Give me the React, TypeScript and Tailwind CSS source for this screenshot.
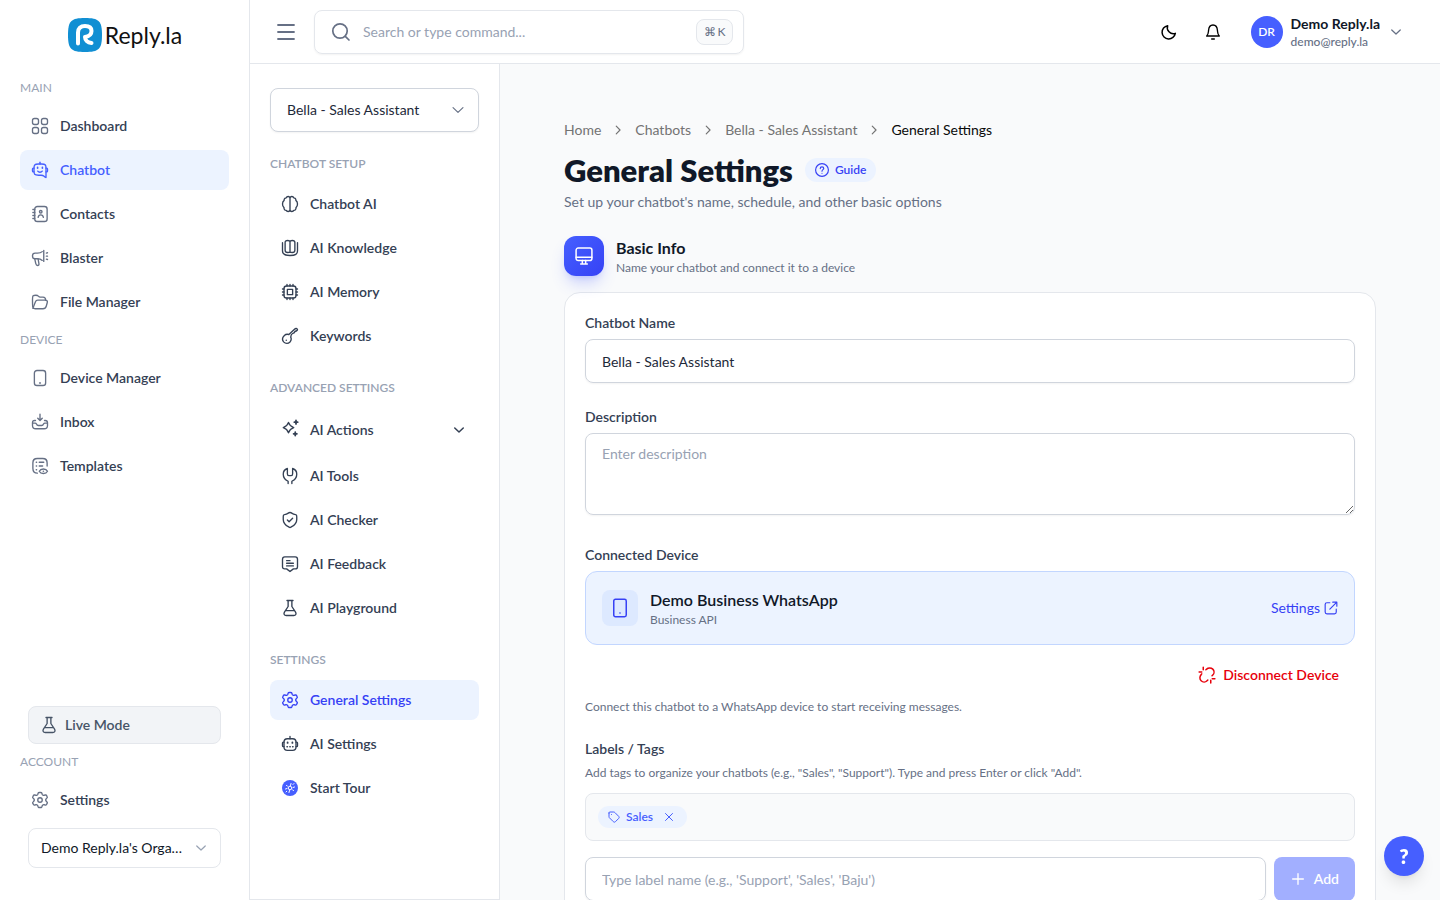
import type { ReactNode } from 'react';
import { clsx } from 'clsx';

interface IconProps {
  className?: string;
  children: ReactNode;
}

const Icon = ({ className = 'm-px size-4.5', children }: IconProps) => (
  <svg
    className={clsx('shrink-0', className)}
    viewBox="0 0 24 24"
    fill="none"
    stroke="currentColor"
    strokeWidth={1.8}
    strokeLinecap="round"
    strokeLinejoin="round"
    aria-hidden="true"
  >
    {children}
  </svg>
);

const DashboardIcon = () => (
  <Icon>
    <rect x="2" y="2" width="8" height="8" rx="2.6" />
    <rect x="14" y="2" width="8" height="8" rx="2.6" />
    <rect x="2" y="14" width="8" height="8" rx="2.6" />
    <rect x="14" y="14" width="8" height="8" rx="2.6" />
  </Icon>
);

const ChatbotIcon = () => (
  <Icon>
    <path d="M12 4V1.5" />
    <path d="M10 4h4c3 0 4.3.3 5.2 1.300.8 1 .8 2.300.8 4.700v12c-1.200 0-2-1-3-2-1-.9-1.800-1-3.500-1H10c-2.900 0-4.200-.3-5.100-1.200C4 16.800 4 15.400 4 13v-3c0-2.400 0-3.800.9-4.700C5.800 4.300 7.100 4 10 4Z" />
    <path d="M4 9.500H3c-.8 0-1 .5-1 1.200v2.600c0 .8.3 1.200 1 1.200h1M20 9.500h1c.8 0 1 .5 1 1.200v2.600c0 .8-.3 1.200-1 1.200h-1" />
    <path d="M8.800 8.500v1M15.200 8.500v1" strokeWidth={2.2} />
    <path d="M9 13.500s1 1.500 3 1.500 3-1.500 3-1.500" />
  </Icon>
);

const ContactsIcon = () => (
  <Icon>
    <rect x="5" y="2" width="16.500" height="20" rx="3.500" />
    <path d="M2.500 6H5M2.500 10H5M2.500 14H5M2.500 18H5" />
    <circle cx="13" cy="9" r="1.700" />
    <path d="M9.500 16.500c.4-2.300 1.700-3.300 3.500-3.300s3.100 1 3.500 3.300" />
  </Icon>
);

const BlasterIcon = () => (
  <Icon>
    <path d="M15 3.500c-1.500 1.400-3.500 2-6.500 2h-3C3.300 5.500 2 7 2 9.200S3.300 13 5.500 13h3c3 0 5 .8 6.500 2.200" />
    <path d="M17 2v14.500" />
    <path d="m5 13.200 1.300 6c.4 1.700 1.300 2.800 2.500 2.800 1.400 0 2-1 1.800-2.200L9.500 13.200" />
    <path d="M20.500 5.500 22 5M20.500 9.500H22M20.500 13.500l1.500.5" />
  </Icon>
);

const FolderIcon = () => (
  <Icon>
    <path d="M2.400 18.500C2 16 2 12 2 8.500c0-2.700 0-4 .8-4.900C3.700 3 4.600 3 6.500 3c1.600 0 2.500.2 3.300 1.200.8.900 1.200 1.300 2.500 1.300H16c2.500 0 3.500.9 3.500 4" />
    <path d="M2.500 20.500 5.800 12c.7-1.900 1.200-2.500 3.200-2.500h9.800c2.300 0 3.500.9 2.900 3.200l-1.400 5c-.7 2.500-1.500 3.300-4.300 3.300H5.500c-2 0-2.800-.1-3.100-2.500" />
  </Icon>
);

const PhoneIcon = () => (
  <Icon>
    <rect x="4.500" y="2" width="15" height="20" rx="3.500" />
    <path d="M11.500 18.500h1" strokeWidth={2} />
  </Icon>
);

const InboxIcon = () => (
  <Icon>
    <path d="M12 1.500v8M9 7l3 3 3-3" />
    <path d="M6 10H5c-2.300 0-3 .9-3 3v3.500C2 20 3 21 6.500 21h11c3.500 0 4.500-1 4.500-4.500V13c0-2.100-.7-3-3-3h-1" />
    <path d="M2.200 13.500h3.300c1 0 1.400.4 1.800 1.200.5 1.300 1.100 2 2.500 2h4.400c1.400 0 2-.7 2.500-2 .4-.8.8-1.200 1.800-1.200h3.300" />
  </Icon>
);

const TemplatesIcon = () => (
  <Icon>
    <path d="M21.500 12V8c0-4.500-1.500-6-6-6h-7c-4.500 0-6 1.500-6 6v7c0 4.500 1.500 6.500 6 6.500" />
    <path d="M7 7h.5M11 7h6M7 12h.5M11 12h4.500M7 17h.5" />
    <path d="M11 19s1.500-3 5.500-3 5.500 3 5.500 3-1.500 3-5.500 3-5.500-3-5.500-3Z" />
    <path d="M16.500 19h.01" strokeWidth={2.2} />
  </Icon>
);

const FlaskIcon = () => (
  <Icon>
    <path d="M8 2h8M9.500 2v8l-4.900 7.500C3.200 19.900 4.300 22 7 22h10c2.700 0 3.800-2.100 2.400-4.500L14.500 10V2M6.500 15.500h11" />
  </Icon>
);

const GearIcon = () => (
  <Icon>
    <path d="M21.300 7.100l-.5-.8c-.4-.7-.6-1-.9-1.100-.4-.1-.7 0-1.400.2l-1.200.3c-.5.100-.9 0-1.300-.2l-.3-.2c-.4-.2-.6-.6-.8-1l-.3-1c-.2-.6-.3-.9-.6-1.100S13.300 2 12.600 2h-1.200c-.8 0-1.100 0-1.400.2s-.4.5-.6 1.100l-.3 1c-.2.400-.4.800-.8 1l-.3.2c-.4.200-.8.300-1.300.2l-1.200-.3c-.7-.2-1-.3-1.400-.2-.3.1-.5.4-.9 1.100l-.5.800c-.4.600-.6.900-.5 1.300s.3.600.7 1.100l1 1.100c.3.400.5 1 .5 1.400s-.2 1-.5 1.400l-1 1.100c-.5.500-.7.800-.7 1.100s.1.700.5 1.300l.5.800c.4.700.6 1 .9 1.100.4.100.7 0 1.400-.2l1.200-.3c.5-.1.900 0 1.300.2l.3.2c.4.200.6.600.8 1l.3 1c.2.600.3.900.6 1.100s.6.200 1.400.2h1.200c.8 0 1.100 0 1.400-.2s.4-.5.600-1.100l.3-1c.2-.4.4-.8.8-1l.3-.2c.4-.2.800-.3 1.300-.2l1.200.3c.7.2 1 .3 1.400.2.300-.1.500-.4.900-1.100l.5-.8c.4-.6.6-.9.5-1.300s-.3-.6-.7-1.100l-1-1.100c-.3-.4-.5-1-.5-1.400s.2-1 .5-1.400l1-1.100c.5-.5.7-.8.7-1.100s-.1-.7-.5-1.300Z" />
    <circle cx="12" cy="12" r="3" />
  </Icon>
);

const BrainIcon = () => (
  <Icon>
    <path d="M12 4.500v15.200M12 4.500C12 3 11 2 9.500 2 8.200 2 7.300 2.700 7 3.800 5 4 4 5.500 4.200 7.200 2.700 8.300 2 10 2 12c0 2.200.6 3.700 2 4.800-.2 2.200 1 3.600 2.900 3.700.5 1 1.400 1.500 2.500 1.500 1.600 0 2.600-.9 2.600-2.300M12 4.500C12 3 13 2 14.500 2c1.300 0 2.200.7 2.500 1.800 2 .2 3 1.700 2.800 3.400C21.300 8.300 22 10 22 12c0 2.200-.6 3.700-2 4.800.2 2.200-1 3.600-2.900 3.700-.5 1-1.400 1.500-2.500 1.500-1.600 0-2.600-.9-2.600-2.300" />
  </Icon>
);

const KnowledgeIcon = () => (
  <Icon>
    <path d="M12 4v13.500M12 4c0-1.300-1-2-3-2s-3.500.7-3.500 2.500V15c0 1.800 1.500 3 3.500 3s3-.5 3-.5M12 4c0-1.300 1-2 3-2s3.500.7 3.500 2.500V15c0 1.800-1.500 3-3.500 3s-3-.5-3-.5" />
    <path d="M2 5v11c0 4 2.500 6 10 6s10-2 10-6V5" />
  </Icon>
);

const CpuIcon = () => (
  <Icon>
    <rect x="4" y="4" width="16" height="16" rx="3.500" />
    <rect x="8.500" y="8.500" width="7" height="7" />
    <path d="M8 4V2M12 4V2M16 4V2M8 22v-2M12 22v-2M16 22v-2M4 8H2M4 12H2M4 16H2M22 8h-2M22 12h-2M22 16h-2" />
  </Icon>
);

const KeyIcon = () => (
  <Icon>
    <path d="M13 13.500c.2-2.500.8-4 2-4.500l2.800-1.500L18.500 6l2.500-1c1-.7 1.200-1.300.8-2-.8-1.300-2.500-1.300-3.800-.1L10.500 10c-2-.6-4.300-.3-6 1.200-3 2.800-3 6-1 8.600 2.600 2.900 6 2.600 8.500.2 1.700-1.900 2-4.300 1-6.500Z" />
    <path d="M7 17.500h.01" strokeWidth={2} />
  </Icon>
);

const SparkleIcon = () => (
  <Icon>
    <path d="M10 4.500c1.400 4.300 2.700 5.600 7 7-4.300 1.400-5.600 2.700-7 7-1.400-4.300-2.700-5.600-7-7 4.300-1.400 5.600-2.700 7-7Z" />
    <path d="M20 2v4.500M17.800 4.200h4.400M19 17.500V22M16.800 19.800h4.400" strokeWidth={2.4} />
  </Icon>
);

const WrenchIcon = () => (
  <Icon>
    <path d="M9.500 22v-3C5.500 17 3 13.500 3 9.500 3 6 5 3.200 8.500 2v7c0 1.500.8 2.500 2 2.500h3c1.200 0 2-1 2-2.500V2C19 3.200 21 6 21 9.500c0 4-2.500 7.500-6.500 9.500v3" />
  </Icon>
);

const ShieldIcon = () => (
  <Icon>
    <path d="M21 11.200V8.400c0-1.500 0-2.300-.4-2.800-.4-.5-1.100-.7-2.500-1.100-1-.3-1.900-.7-2.600-1.100C13.900 2.500 13 2 12 2s-1.900.5-3.500 1.400c-.7.400-1.600.8-2.600 1.100-1.400.4-2.100.6-2.500 1.100-.4.500-.4 1.300-.4 2.800v2.800c0 5.400 4.900 8.700 7.300 10 .6.300 1 .8 1.700.8s1.100-.5 1.700-.8c2.400-1.300 7.300-4.600 7.300-10Z" />
    <path d="m8.500 12 2.300 2.300 4.700-4.600" />
  </Icon>
);

const FeedbackIcon = () => (
  <Icon>
    <path d="M5 2.500h14c2 0 3 1 3 3v10c0 2-1 3-3 3h-2.500L12 22l-4.500-3.500H5c-2 0-3-1-3-3v-10c0-2 1-3 3-3Z" />
    <path d="M7.500 7.500H12M7.500 11h9M7.500 14.500h9" />
  </Icon>
);

const RobotIcon = () => (
  <Icon>
    <path d="M12 5V2M4 9.500H3c-.7 0-1 .4-1 1.200v3.600c0 .8.3 1.200 1 1.200h1M20 9.500h1c.7 0 1 .4 1 1.200v3.600c0 .8-.3 1.200-1 1.200h-1" />
    <rect x="4" y="5" width="16" height="15.500" rx="4.500" />
    <path d="M8.800 10v.5M15.200 10v.5" strokeWidth={2.4} />
    <path d="M8 15.500h.5M11.800 15.500h.5M15.500 15.500h.5" strokeWidth={2} />
  </Icon>
);

const TourIcon = () => (
  <svg className="size-5 shrink-0" viewBox="0 0 20 20" fill="none" aria-hidden="true">
    <circle cx="10" cy="10" r="8" fill="#465fff" />
    <circle cx="10" cy="10" r="1.800" stroke="#fff" />
    <path
      d="M10.500 7.500 11 5.500M9.500 12.500 9 14.500M13 9.500l1.500-.5M7 10.500l-1.500.5M13 6.500l1-1M6 14l.8-.8M6.500 7.500l.8.5M12.700 12l.8.5"
      stroke="#fff"
      strokeLinecap="round"
    />
  </svg>
);

const ChevronDown = ({ className = 'size-3.5', strokeWidth = 2 }: { className?: string; strokeWidth?: number }) => (
  <Icon className={className}>
    <path d="m3.500 8 8.500 8 8.500-8" strokeWidth={strokeWidth} />
  </Icon>
);

interface NavItemProps {
  icon: ReactNode;
  label: string;
  active?: boolean;
  strong?: boolean;
}

const NavItem = ({ icon, label, active, strong }: NavItemProps) => (
  <li>
    <a
      href="#"
      className={clsx(
        'flex h-10 items-center gap-2.5 rounded-lg px-2.5 text-sm font-semibold',
        active ? 'bg-[#ecf3ff]' : 'text-[#344054]',
        active && (strong ? 'text-[#3641f5]' : 'text-[#465fff]'),
      )}
    >
      <span className={clsx(!active && !strong && 'text-[#667085]')}>{icon}</span>
      {label}
    </a>
  </li>
);

const MainHeading = ({ children }: { children: ReactNode }) => (
  <h2 className="flex h-9 items-center text-xs text-[#98a2b3] uppercase">{children}</h2>
);

const SubHeading = ({ children }: { children: ReactNode }) => (
  <h2 className="mt-6 mb-3 text-xs leading-4 font-semibold text-[#98a2b3] uppercase">{children}</h2>
);

const Logo = () => (
  <a href="#" className="flex h-[70px] items-center justify-center gap-0.5 text-[#111111]">
    <svg className="size-9" viewBox="0 0 36 36" fill="none" aria-hidden="true">
      <path d="M18 1c14 0 17 3 17 17s-3 17-17 17S1 32 1 18 4 1 18 1Z" fill="#118fd3" />
      <path
        d="M11 26.500v-11c0-4 2.500-6.500 7-6.500 4.300 0 6.500 2 6.500 5 0 3.500-3 5.500-6.500 6 0 3 2.500 5.500 6.500 6"
        stroke="#fff"
        strokeWidth="4"
        strokeLinecap="round"
        strokeLinejoin="round"
      />
    </svg>
    <span className="text-[23px]">Reply.la</span>
  </a>
);

const MainSidebar = () => (
  <aside className="flex w-[250px] shrink-0 flex-col border-r border-[#e4e7ec] bg-white px-5 pb-8">
    <Logo />
    <nav aria-label="Main">
      <MainHeading>Main</MainHeading>
      <ul className="space-y-1">
        <NavItem icon={<DashboardIcon />} label="Dashboard" />
        <NavItem icon={<ChatbotIcon />} label="Chatbot" active />
        <NavItem icon={<ContactsIcon />} label="Contacts" />
        <NavItem icon={<BlasterIcon />} label="Blaster" />
        <NavItem icon={<FolderIcon />} label="File Manager" />
      </ul>
      <MainHeading>Device</MainHeading>
      <ul className="space-y-1">
        <NavItem icon={<PhoneIcon />} label="Device Manager" />
        <NavItem icon={<InboxIcon />} label="Inbox" />
        <NavItem icon={<TemplatesIcon />} label="Templates" />
      </ul>
    </nav>
    <div className="mt-auto">
      <div className="px-2">
        <button
          type="button"
          className="flex w-full items-center gap-1.5 rounded-lg border border-[#e4e7ec] bg-[#f2f4f7] px-2.5 py-2 text-sm font-semibold text-[#475467]"
        >
          <FlaskIcon />
          Live Mode
        </button>
      </div>
      <MainHeading>Account</MainHeading>
      <ul>
        <NavItem icon={<GearIcon />} label="Settings" />
      </ul>
      <div className="relative mx-2 mt-2">
        <select
          aria-label="Organization"
          className="h-10 w-full appearance-none truncate rounded-lg border border-[#e4e7ec] bg-white pr-8 pl-3 text-sm text-[#101828]"
        >
          <option>Demo Reply.la's Organization</option>
        </select>
        <span className="pointer-events-none absolute inset-y-0 right-3.5 flex items-center text-[#98a2b3]">
          <ChevronDown className="size-3" strokeWidth={2.4} />
        </span>
      </div>
    </div>
  </aside>
);

const TopBar = () => (
  <header className="flex h-16 shrink-0 items-center border-b border-[#e4e7ec] bg-white pr-9 pl-6">
    <button type="button" aria-label="Toggle sidebar" className="mr-4 p-0.5 text-[#667085]">
      <svg className="size-5" viewBox="0 0 20 20" stroke="currentColor" strokeWidth="1.800" strokeLinecap="round" aria-hidden="true">
        <path d="M2 3h16M2 10h16M2 17h16" />
      </svg>
    </button>
    <label className="flex h-11 w-[430px] items-center gap-2.5 rounded-lg border border-[#e4e7ec] pr-2.5 pl-3.5 text-[#667085] shadow-xs">
      <svg className="size-6 shrink-0" viewBox="0 0 24 24" fill="none" stroke="currentColor" strokeWidth="1.700" strokeLinecap="round" aria-hidden="true">
        <circle cx="11" cy="11" r="7.200" />
        <path d="m16.300 16.300 3.700 3.700" />
      </svg>
      <input
        type="text"
        aria-label="Search"
        placeholder="Search or type command..."
        className="min-w-0 flex-1 text-sm outline-none placeholder:text-[#98a2b3]"
      />
      <kbd className="flex h-[26px] w-[37px] items-center justify-center gap-0.5 rounded-lg border border-[#e4e7ec] bg-[#f9fafb] font-[Lato,sans-serif] text-xs">
        <span>⌘</span>
        <span>K</span>
      </kbd>
    </label>
    <div className="ml-auto flex items-center">
      <button type="button" aria-label="Dark mode" className="flex size-11 items-center justify-center text-black">
        <Icon className="size-4">
          <path d="M21.500 14A10 10 0 1 1 10 2.500c-2.500 6.500 4 14 11.500 11.500Z" strokeWidth={2.2} />
        </Icon>
      </button>
      <button type="button" aria-label="Notifications" className="flex size-11 items-center justify-center text-black">
        <Icon className="size-4">
          <path d="M2.500 18h19c-2.500-2-2.500-4.500-2.800-8C18.400 5 16 1.500 12 1.500S5.600 5 5.300 10C5 13.500 5 16 2.500 18ZM10 22.500h4" strokeWidth={2} />
        </Icon>
      </button>
      <button type="button" className="ml-4 flex items-center gap-2 text-left">
        <span className="flex size-8 items-center justify-center rounded-full bg-[#465fff] text-xs font-semibold text-white">DR</span>
        <span>
          <span className="block text-sm leading-5 font-bold text-[#101828]">Demo Reply.la</span>
          <span className="block text-xs leading-4 font-medium text-[#667085]">demo@reply.la</span>
        </span>
        <span className="flex size-4 items-center justify-center text-[#667085]">
          <ChevronDown className="size-3" strokeWidth={2.5} />
        </span>
      </button>
    </div>
  </header>
);

const ChatbotSidebar = () => (
  <aside className="w-[250px] shrink-0 border-r border-b border-[#e4e7ec] bg-white px-5 pt-6">
    <div className="relative">
      <select
        aria-label="Chatbot"
        className="h-11 w-full appearance-none rounded-lg border border-[#d0d5dd] bg-white px-4 text-sm text-[#1d2939] shadow-xs"
      >
        <option>Bella - Sales Assistant</option>
      </select>
      <span className="pointer-events-none absolute inset-y-0 right-3.5 flex items-center text-[#667085]">
        <ChevronDown />
      </span>
    </div>
    <nav aria-label="Chatbot sections">
      <SubHeading>Chatbot setup</SubHeading>
      <ul className="space-y-1">
        <NavItem strong icon={<BrainIcon />} label="Chatbot AI" />
        <NavItem strong icon={<KnowledgeIcon />} label="AI Knowledge" />
        <NavItem strong icon={<CpuIcon />} label="AI Memory" />
        <NavItem strong icon={<KeyIcon />} label="Keywords" />
      </ul>
      <SubHeading>Advanced settings</SubHeading>
      <ul className="space-y-1">
        <li>
          <button type="button" className="flex h-11 w-full items-center gap-2.5 px-2.5 text-sm font-semibold text-[#344054]">
            <span className="pb-1">
              <SparkleIcon />
            </span>
            AI Actions
            <span className="mr-1 ml-auto">
              <ChevronDown className="size-3" strokeWidth={3} />
            </span>
          </button>
        </li>
        <NavItem strong icon={<WrenchIcon />} label="AI Tools" />
        <NavItem strong icon={<ShieldIcon />} label="AI Checker" />
        <NavItem strong icon={<FeedbackIcon />} label="AI Feedback" />
        <NavItem strong icon={<FlaskIcon />} label="AI Playground" />
      </ul>
      <SubHeading>Settings</SubHeading>
      <ul className="space-y-1">
        <NavItem strong active icon={<GearIcon />} label="General Settings" />
        <NavItem strong icon={<RobotIcon />} label="AI Settings" />
        <NavItem strong icon={<TourIcon />} label="Start Tour" />
      </ul>
    </nav>
  </aside>
);

const Breadcrumb = () => (
  <nav aria-label="Breadcrumb">
    <ol className="flex items-center gap-2.5 text-sm text-[#737373]">
      {['Home', 'Chatbots', 'Bella - Sales Assistant'].map((label) => (
        <li key={label} className="flex items-center gap-2.5">
          <a href="#">{label}</a>
          <Icon className="size-3.5">
            <path d="m9 5.500 6.500 6.500L9 18.500" strokeWidth={2} />
          </Icon>
        </li>
      ))}
      <li className="text-[#0a0a0a]">General Settings</li>
    </ol>
  </nav>
);

const GeneralSettings = () => (
  <main className="min-w-0 flex-1 overflow-y-auto bg-[#f9fafb] px-16 pt-14 pb-6 [scrollbar-width:none]">
    <Breadcrumb />
    <div className="mt-3 flex items-center gap-3">
      <h1 className="text-[31px] leading-9 font-extrabold text-[#101828]">General Settings</h1>
      <a href="#" className="flex h-6 items-center gap-1.5 rounded-full bg-[#ecf3ff] px-2.5 text-xs font-semibold text-[#3641f5]">
        <Icon className="size-3.5">
          <circle cx="12" cy="12" r="11" strokeWidth={2} />
          <path d="M9 9.500c0-1.700 1.200-3 3-3s3 1.200 3 2.800c0 2-3 2.200-3 4.700M12 17.500h.01" strokeWidth={2} />
        </Icon>
        Guide
      </a>
    </div>
    <p className="mt-1 text-sm text-[#667085]">Set up your chatbot's name, schedule, and other basic options</p>

    <section className="mt-6">
      <div className="mb-4 flex items-center gap-3">
        <span className="flex size-10 items-center justify-center rounded-xl bg-linear-to-br from-[#465fff] to-[#3641f5] text-white shadow-lg shadow-[#465fff]/25">
          <Icon className="size-5">
            <rect x="2.500" y="2.500" width="19" height="15" rx="2.500" />
            <path d="M2.500 13.500h19M10 17.500V21M14 17.500V21M8 21.500h8" />
          </Icon>
        </span>
        <div>
          <h2 className="text-base leading-6 font-bold text-[#101828]">Basic Info</h2>
          <p className="text-xs leading-4 text-[#667085]">Name your chatbot and connect it to a device</p>
        </div>
      </div>

      <form className="rounded-2xl border border-[#e4e7ec] bg-white p-5 text-sm text-[#344054]">
        <label htmlFor="name" className="mb-1.5 block font-semibold">
          Chatbot Name
        </label>
        <input
          id="name"
          type="text"
          defaultValue="Bella - Sales Assistant"
          className="h-11 w-full rounded-lg border border-[#d0d5dd] px-4 text-[#1d2939] shadow-xs"
        />

        <label htmlFor="description" className="mt-6 mb-1.5 block font-semibold">
          Description
        </label>
        <textarea
          id="description"
          rows={3}
          placeholder="Enter description"
          className="block w-full rounded-lg border border-[#d0d5dd] px-4 py-2.5 shadow-xs placeholder:text-[#98a2b3]"
        />

        <h3 className="mt-[30px] mb-1.5 font-semibold">Connected Device</h3>
        <div className="flex h-[74px] items-center gap-3 rounded-xl border border-[#c2d6ff] bg-[#ecf3ff] px-4">
          <span className="flex size-9 items-center justify-center rounded-lg bg-[#dde9ff] text-[#3641f5]">
            <Icon className="size-5">
              <rect x="4.500" y="1.500" width="15" height="21" rx="2" />
              <path d="M12 18h.01" strokeWidth={2} />
            </Icon>
          </span>
          <div>
            <p className="text-base leading-6 font-semibold text-[#101828]">Demo Business WhatsApp</p>
            <p className="text-xs leading-4 text-[#667085]">Business API</p>
          </div>
          <a href="#" className="ml-auto flex items-center gap-1 text-[#3641f5]">
            Settings
            <Icon className="size-3.5">
              <path d="M10 3H5C3 3 2 4 2 6v13c0 2 1 3 3 3h13c2 0 3-1 3-3v-5M15 2h7v7M10 14 22 2" strokeWidth={2} />
            </Icon>
          </a>
        </div>
        <div className="mt-2 flex justify-end">
          <button type="button" className="flex h-11 items-center gap-1.5 px-4 font-semibold text-[#e7000b]">
            <Icon>
              <path
                d="m10.500 5 1-.8c2.200-2.200 6-2.200 8.200 0s2.200 5.700 0 7.900l-1 1M5 10.500l-.8 1c-2.200 2.200-2.200 6 0 8.200s5.700 2.200 7.900 0l1-1M7 1.500V5M1.500 8H5M17 19v3.500M19 17h3.500"
                strokeWidth={2}
              />
            </Icon>
            Disconnect Device
          </button>
        </div>
        <p className="mt-0.5 text-xs leading-4 text-[#667085]">Connect this chatbot to a WhatsApp device to start receiving messages.</p>

        <label htmlFor="tag" className="mt-6 mb-1.5 block font-semibold">
          Labels / Tags
        </label>
        <p className="mb-3 text-xs leading-4 text-[#667085]">
          Add tags to organize your chatbots (e.g., "Sales", "Support"). Type and press Enter or click "Add".
        </p>
        <div className="mb-4 flex h-12 items-center rounded-lg border border-[#e4e7ec] bg-[#f9fafb] px-3">
          <span className="flex h-[22px] items-center gap-1.5 rounded-full bg-[#ecf3ff] px-2.5 text-xs font-semibold text-[#465fff]">
            <Icon className="size-3">
              <path
                d="M2 4v7.500c0 1 .3 1.500 1 2.200l7.500 7.500c1.500 1.500 3 1.500 4.500 0l6.200-6.200c1.500-1.500 1.500-3 0-4.500L13.700 3c-.7-.7-1.200-1-2.200-1H4C2.700 2 2 2.700 2 4ZM7 7h.01"
                strokeWidth={2}
              />
            </Icon>
            Sales
            <button type="button" aria-label="Remove Sales" className="ml-0.5 flex size-4 items-center justify-center">
              <Icon className="size-3">
                <path d="m5 5 14 14M19 5 5 19" strokeWidth={2} />
              </Icon>
            </button>
          </span>
        </div>
        <div className="flex gap-2">
          <input
            id="tag"
            type="text"
            placeholder="Type label name (e.g., 'Support', 'Sales', 'Baju')"
            className="h-11 min-w-0 flex-1 rounded-lg border border-[#d0d5dd] px-4 shadow-xs placeholder:text-[#98a2b3]"
          />
          <button type="button" className="flex h-11 items-center gap-2 rounded-lg bg-[#a2afff] px-4 font-semibold text-white">
            <Icon className="size-4">
              <path d="M12 4v16M4 12h16" strokeWidth={2} />
            </Icon>
            Add
          </button>
        </div>
      </form>
    </section>
  </main>
);

export default function App() {
  return (
    <div className="flex h-screen bg-white font-[Lato,sans-serif] text-[#101828]">
      <MainSidebar />
      <div className="flex min-w-0 flex-1 flex-col">
        <TopBar />
        <div className="flex min-h-0 flex-1">
          <ChatbotSidebar />
          <GeneralSettings />
        </div>
      </div>
      <button
        type="button"
        aria-label="Help"
        className="fixed right-4 bottom-6 flex size-10 items-center justify-center rounded-full bg-[#465fff] text-xl font-extrabold text-white shadow-lg"
      >
        ?
      </button>
    </div>
  );
}
